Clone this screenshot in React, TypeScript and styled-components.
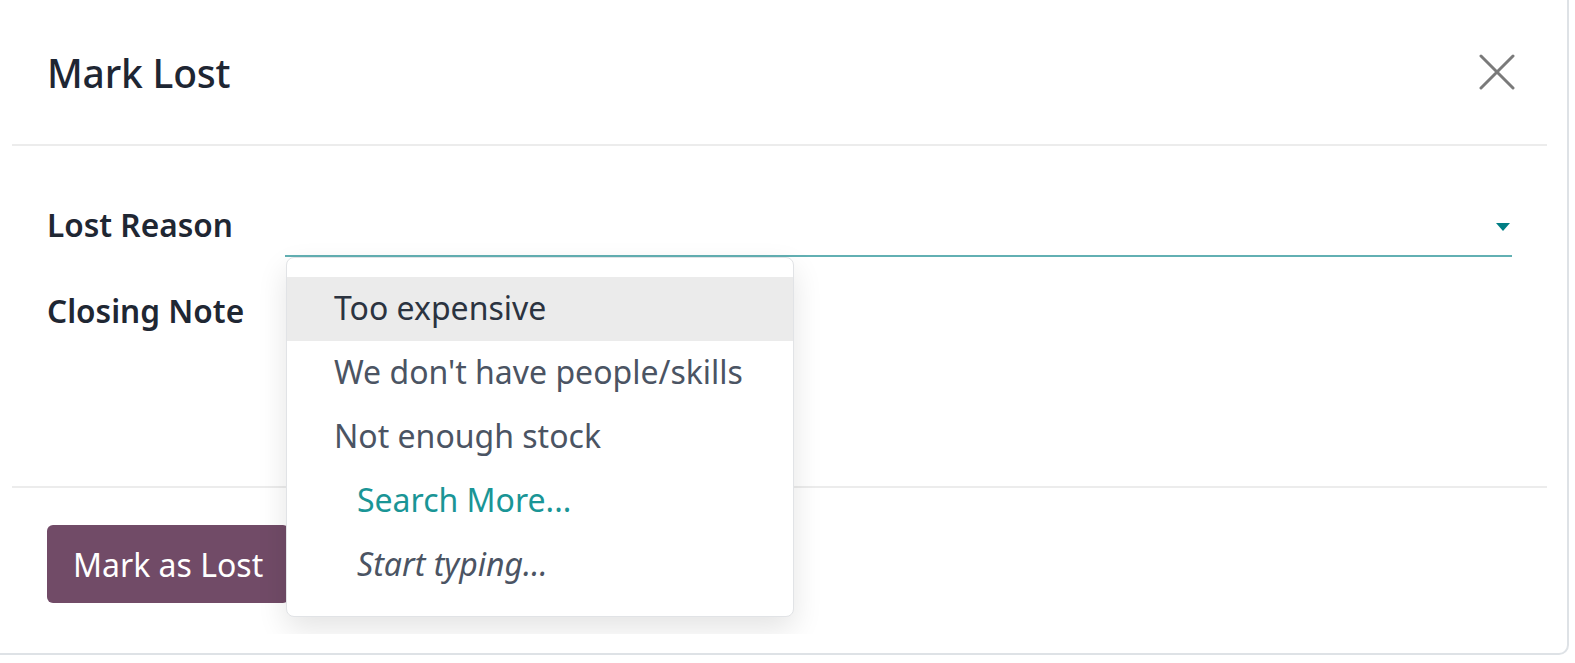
import styled, { createGlobalStyle } from "styled-components";

const GlobalStyle = createGlobalStyle`
  html, body {
    margin: 0;
    padding: 0;
    background: #ffffff;
  }
  body {
    font-family: "Noto Sans", "Open Sans", sans-serif;
    color: #1f2937;
  }
`;

const Modal = styled.div`
  box-sizing: border-box;
  width: 1569px;
  height: 655px;
  display: flex;
  flex-direction: column;
  background: #ffffff;
  border-right: 2px solid #dee2e6;
  border-bottom: 2px solid #dee2e6;
  border-bottom-right-radius: 10px;
  padding-bottom: 19px;
`;

const Header = styled.header`
  height: 144px;
  flex: none;
  display: flex;
  align-items: center;
  justify-content: space-between;
  padding: 0 52px 0 47px;
`;

const Title = styled.h1`
  margin: 0;
  font-size: 39px;
  font-weight: 500;
  color: #1e2633;
  letter-spacing: -0.2px;
`;

const CloseButton = styled.button`
  width: 36px;
  height: 36px;
  padding: 0;
  border: 0;
  background: transparent;
  display: flex;
  cursor: pointer;
`;

const Divider = styled.hr`
  flex: none;
  height: 2px;
  margin: 0 20px 0 12px;
  border: 0;
  background: #ececec;
`;

const Content = styled.div`
  flex: 1;
  display: flex;
  flex-direction: column;
  overflow: hidden;
`;

const Body = styled.div`
  flex: none;
  display: grid;
  grid-template-columns: 238px 1fr;
  grid-auto-rows: min-content;
  row-gap: 28px;
  padding: 53px 55px 25px 47px;
  height: 340px;
  box-sizing: border-box;
`;

const Label = styled.label`
  font-size: 31.6px;
  font-weight: 600;
  color: #1f2733;
  display: flex;
  align-items: center;
  height: 58px;
  padding-bottom: 8px;
  box-sizing: border-box;
  white-space: nowrap;
`;

const SelectBox = styled.div`
  position: relative;
  height: 58px;
  box-sizing: border-box;
  border-bottom: 2px solid #62b0b3;
  display: flex;
  align-items: center;
  justify-content: flex-end;
`;

const Caret = styled.span`
  width: 0;
  height: 0;
  margin: 0 2px 0 0;
  border-left: 7px solid transparent;
  border-right: 7px solid transparent;
  border-top: 8px solid #017e84;
`;

const NoteArea = styled.div`
  min-height: 58px;
`;

const Dropdown = styled.ul`
  position: absolute;
  top: calc(100% + 2px);
  left: 1px;
  z-index: 5;
  width: 508px;
  margin: 0;
  padding: 19px 0;
  list-style: none;
  background: #ffffff;
  border: 1px solid #e1e3e6;
  border-radius: 8px;
  box-shadow: 0 12px 30px rgba(0, 0, 0, 0.11);
  box-sizing: border-box;
`;

const Option = styled.li<{ $active?: boolean; $variant?: "link" | "hint" }>`
  height: 64px;
  display: flex;
  align-items: center;
  padding-left: ${(p) => (p.$variant ? "70px" : "47px")};
  padding-bottom: 4px;
  box-sizing: border-box;
  font-size: 32px;
  white-space: nowrap;
  background: ${(p) => (p.$active ? "#ebebeb" : "transparent")};
  color: ${(p) =>
    p.$variant === "link" ? "#1a9596" : p.$active ? "#2b3340" : "#4b5463"};
  font-style: ${(p) => (p.$variant === "hint" ? "italic" : "normal")};
`;

const Footer = styled.footer`
  flex: none;
  display: flex;
  padding: 37px 47px 31px;
`;

const PrimaryButton = styled.button`
  height: 78px;
  padding: 0 26px;
  border: 0;
  border-radius: 6px;
  background: #714b67;
  color: #ffffff;
  font-family: inherit;
  font-size: 32px;
  cursor: pointer;
`;

const reasons = ["Too expensive", "We don't have people/skills", "Not enough stock"];

export default function App() {
  return (
    <>
      <GlobalStyle />
      <Modal>
        <Header>
          <Title>Mark Lost</Title>
          <CloseButton aria-label="Close">
            <svg width="36" height="36" viewBox="0 0 36 36">
              <path
                d="M2 2 L34 34 M34 2 L2 34"
                stroke="#7a7a7a"
                strokeWidth="3"
                strokeLinecap="round"
              />
            </svg>
          </CloseButton>
        </Header>
        <Divider />
        <Content>
          <Body>
            <Label>Lost Reason</Label>
            <SelectBox>
              <Caret />
              <Dropdown>
                {reasons.map((r, i) => (
                  <Option key={r} $active={i === 0}>
                    {r}
                  </Option>
                ))}
                <Option $variant="link">Search More...</Option>
                <Option $variant="hint">Start typing...</Option>
              </Dropdown>
            </SelectBox>
            <Label>Closing Note</Label>
            <NoteArea />
          </Body>
          <Divider />
          <Footer>
            <PrimaryButton>Mark as Lost</PrimaryButton>
          </Footer>
        </Content>
      </Modal>
    </>
  );
}
